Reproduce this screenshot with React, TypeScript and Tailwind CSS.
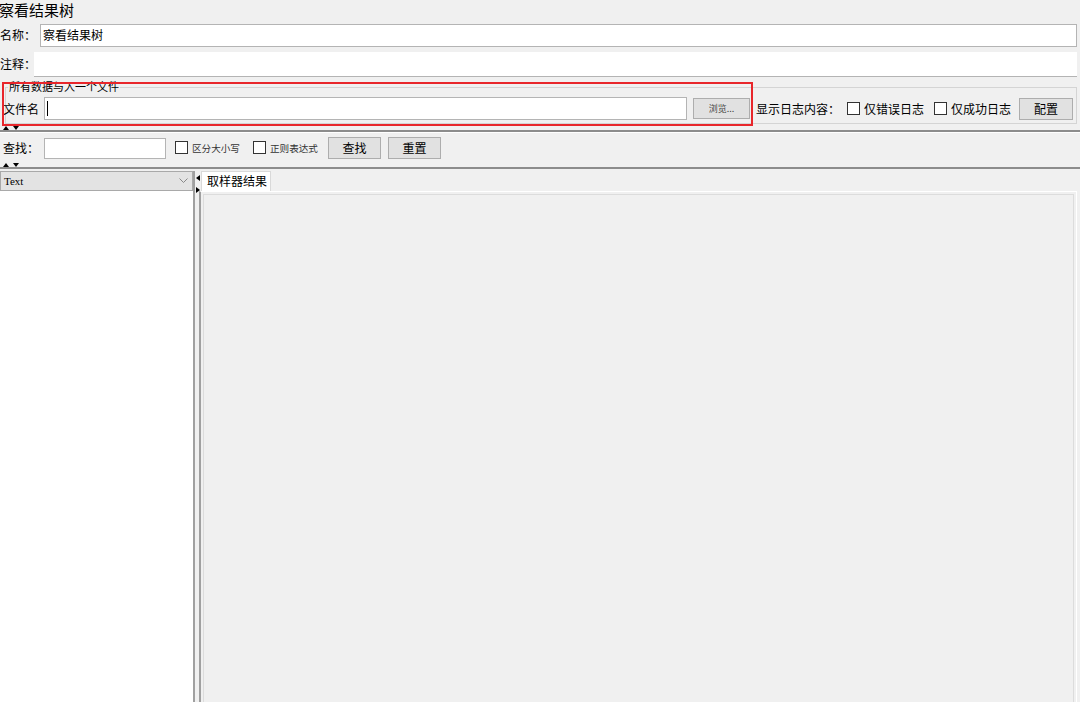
import React from "react"

const font = { fontFamily: '"Noto Sans CJK SC", "Noto Sans", sans-serif' }

function CheckBox({ label, small }: { label: string; small?: boolean }) {
  return (
    <div className="flex items-center gap-[4px] shrink-0">
      <span className="w-[13px] h-[13px] border border-[#333] bg-white shrink-0" />
      <span className={"whitespace-nowrap " + (small ? "text-[9.6px] text-[#333]" : "text-[12px]")}>{label}</span>
    </div>
  )
}

function Btn({ label, className }: { label: string; className?: string }) {
  return (
    <div
      className={
        "flex items-center justify-center border border-[#adadad] bg-[#e1e1e1] text-[12px] whitespace-nowrap shrink-0 " +
        (className ?? "")
      }
    >
      {label}
    </div>
  )
}

function Splitter() {
  return (
    <div className="h-[4px] flex items-center gap-[4px] pl-[3px]">
      <span className="w-0 h-0 border-l-[3px] border-r-[3px] border-b-[4px] border-l-transparent border-r-transparent border-b-black" />
      <span className="w-0 h-0 border-l-[3px] border-r-[3px] border-t-[4px] border-l-transparent border-r-transparent border-t-black" />
    </div>
  )
}

function Label({ text, w }: { text: string; w: string }) {
  return <span className={"text-[12px] whitespace-nowrap shrink-0 " + w}>{text}</span>
}

export default function App() {
  return (
    <div className="w-[1080px] h-[702px] bg-[#f0f0f0] text-black overflow-hidden relative" style={font}>
      {/* title */}
      <div className="h-[23px] text-[15px] leading-[19px] -ml-[1px]">察看结果树</div>

      {/* name */}
      <div className="h-[24px] flex items-center pr-[3px]">
        <Label text="名称：" w="w-[40px]" />
        <div className="flex-1 h-[23px] border border-[#b4b4b4] bg-white text-[12px] leading-[20px] pl-[2px]">
          察看结果树
        </div>
      </div>

      {/* comment */}
      <div className="h-[28px] flex items-center pr-[3px] mt-[3px]">
        <Label text="注释：" w="w-[34px]" />
        <div className="flex-1 h-[25px] bg-white border-b border-[#b4b4b4]" />
      </div>

      {/* write to file */}
      <div className="relative h-[48px] pt-[9px] pl-[5px] pr-[3px]">
        <div className="h-[37px] border border-[#d4d4d4] relative">
          <span className="absolute -top-[8px] left-[2px] px-[1px] bg-[#f0f0f0] text-[11px] leading-[13px] whitespace-nowrap">
            所有数据与入一个文件
          </span>
        </div>
        <div className="absolute top-[19px] left-[0px] right-[3px] flex items-center h-[23px]">
          <span className="text-[12px] w-[44px] pl-[3px] whitespace-nowrap shrink-0">文件名</span>
          <div className="w-[643px] h-[23px] border border-[#b4b4b4] bg-white flex items-center pl-[2px] shrink-0">
            <span className="w-[1px] h-[15px] bg-black" />
          </div>
          <Btn label="浏览..." className="ml-[6px] w-[57px] h-[21px] !text-[9px] text-[#444]" />
          <span className="text-[12px] ml-[6px] mr-[7px] whitespace-nowrap shrink-0">显示日志内容：</span>
          <CheckBox label="仅错误日志" />
          <div className="w-[10px] shrink-0" />
          <CheckBox label="仅成功日志" />
          <Btn label="配置" className="ml-[8px] w-[54px] h-[22px]" />
        </div>
        {/* red annotation box */}
        <div className="absolute left-[2px] top-[4px] w-[751px] h-[44px] border-2 border-[#e8262b]" />
      </div>

      <Splitter />
      <div className="h-[2px] bg-[#8c8c8c]" />
      <div className="h-[1px] bg-white" />

      {/* search */}
      <div className="h-[30px] flex items-center">
        <span className="text-[12px] w-[44px] pl-[3px] whitespace-nowrap shrink-0">查找：</span>
        <div className="w-[122px] h-[21px] border border-[#b4b4b4] bg-white shrink-0" />
        <div className="ml-[9px]">
          <CheckBox label="区分大小写" small />
        </div>
        <div className="ml-[13px]">
          <CheckBox label="正则表达式" small />
        </div>
        <Btn label="查找" className="ml-[10px] w-[53px] h-[22px]" />
        <Btn label="重置" className="ml-[7px] w-[53px] h-[22px]" />
      </div>

      <Splitter />
      <div className="h-[2px] bg-[#8c8c8c]" />
      <div className="h-[2px]" />

      {/* main */}
      <div className="flex h-[600px]">
        <div className="w-[195px] flex flex-col border-r-[2px] border-[#a0a0a0]">
          <div className="h-[20px] bg-[#e3e3e3] border border-[#a9a9a9] flex items-center justify-between pl-[3px] pr-[4px]">
            <span className="text-[11px]" style={{ fontFamily: '"Liberation Serif", serif' }}>
              Text
            </span>
            <svg width="9" height="6" viewBox="0 0 9 6">
              <path d="M0.5 0.5 L4.5 4.5 L8.5 0.5" fill="none" stroke="#888" strokeWidth="1" />
            </svg>
          </div>
          <div className="flex-1 bg-white" />
        </div>
        <div className="w-[5px] flex flex-col items-center pt-[4px] gap-[6px]">
          <span className="w-0 h-0 border-t-[3px] border-b-[3px] border-r-[4px] border-t-transparent border-b-transparent border-r-black" />
          <span className="w-0 h-0 border-t-[3px] border-b-[3px] border-l-[4px] border-t-transparent border-b-transparent border-l-black" />
        </div>
        <div className="flex-1 flex flex-col pr-[3px]">
          <div className="flex h-[20px]">
            <div className="ml-[1px] w-[70px] bg-white border border-b-0 border-[#d9d9d9] text-[12px] leading-[18px] pl-[5px] whitespace-nowrap">
              取样器结果
            </div>
          </div>
          <div className="flex-1 border border-white border-l-[#a0a0a0] border-l-[2px] bg-[#f0f0f0] p-[2px] -ml-[1px]">
            <div className="h-full border border-[#dcdcdc] bg-[#f0f0f0]" />
          </div>
        </div>
      </div>
    </div>
  )
}
